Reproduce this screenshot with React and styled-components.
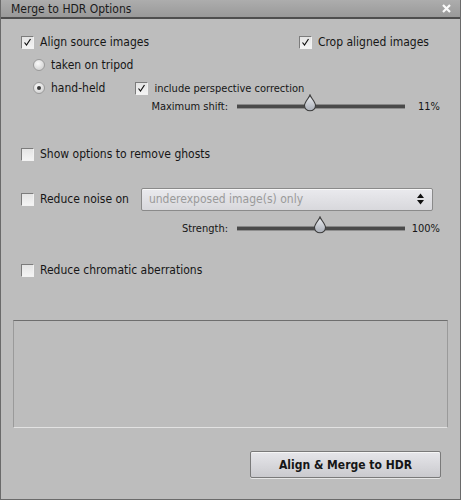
import React from "react";
import styled, { createGlobalStyle } from "styled-components";

//Global======================================================
const GlobalStyle = createGlobalStyle`
  html, body {
    margin: 0;
    padding: 0;
    background: #bdbdbd;
  }
  body {
    font-family: "DejaVu Sans Condensed", "DejaVu Sans", "Liberation Sans", sans-serif;
    color: #161616;
  }
`;

//Styled Components==========================================
const Dialog = styled.div`
  width: 461px;
  height: 500px;
  box-sizing: border-box;
  background: #bdbdbd;
  border-left: 1px solid #6a6a6a;
  border-right: 1px solid #6a6a6a;
  border-bottom: 1px solid #6a6a6a;
  display: flex;
  flex-direction: column;
`;

const TitleBar = styled.div`
  height: 17px;
  display: flex;
  align-items: center;
  justify-content: space-between;
  padding: 0 9px 0 10px;
  background: linear-gradient(#adadad, #999999);
  border-bottom: 2px solid #4e4e4e;
  font-size: 12px;
  color: #1a1a1a;
`;

const Body = styled.div`
  flex: 1;
  display: flex;
  flex-direction: column;
  padding: 0 13px 0 20px;
`;

const Row = styled.div`
  display: flex;
  align-items: center;
  height: 16px;
  margin-top: ${p => p.$top || 0}px;
  padding-left: ${p => p.$indent || 0}px;
`;

const Spread = styled(Row)`
  justify-content: space-between;
  padding-right: 18px;
`;

const Option = styled.label`
  display: flex;
  align-items: center;
  gap: 6px;
  margin-left: ${p => p.$gap || 0}px;
  font-size: ${p => (p.$small ? 11 : 12)}px;
  white-space: nowrap;
`;

const Box = styled.span`
  width: 11px;
  height: 11px;
  flex: none;
  border: 1px solid #7c7c7c;
  border-right-color: #f2f2f2;
  border-bottom-color: #f2f2f2;
  background: linear-gradient(#e4e4e4, #f4f4f4);
  display: flex;
  align-items: center;
  justify-content: center;
`;

const Radio = styled.span`
  width: 12px;
  height: 12px;
  flex: none;
  border-radius: 50%;
  box-sizing: border-box;
  border: 1px solid #9a9a9a;
  background: radial-gradient(circle at 40% 35%, #fafafa, #d4d4d4 75%);
  display: flex;
  align-items: center;
  justify-content: center;
  &::after {
    content: "";
    width: 4px;
    height: 4px;
    border-radius: 50%;
    background: ${p => (p.$on ? "#3a3a3a" : "transparent")};
  }
`;

const SliderRow = styled(Row)`
  height: 18px;
`;

const SliderLabel = styled.span`
  width: ${p => p.$width}px;
  font-size: 11px;
  text-align: right;
  flex: none;
`;

const Track = styled.div`
  position: relative;
  width: 168px;
  height: 3px;
  margin-left: 9px;
  flex: none;
  background: #4a4a4a;
  border-top: 1px solid #888;
  border-bottom: 1px solid #8e8e8e;
`;

const Thumb = styled.svg`
  position: absolute;
  top: -11px;
  margin-left: -7px;
`;

const Value = styled.span`
  width: 35px;
  text-align: right;
  font-size: 11px;
  flex: none;
`;

const Select = styled.div`
  margin-left: 12px;
  width: 292px;
  height: 23px;
  box-sizing: border-box;
  display: flex;
  align-items: center;
  justify-content: space-between;
  padding: 0 8px 0 7px;
  border: 1px solid #8a8a8a;
  border-radius: 2px;
  background: linear-gradient(#eaeaee, #d8d8dc);
  box-shadow: inset 0 1px 0 #f8f8f8;
  color: #9a9a9a;
  font-size: 12px;
`;

const Spacer = styled.div`
  height: ${p => p.$h}px;
  flex: none;
`;

const Messages = styled.div`
  margin-left: -8px;
  width: 435px;
  height: 108px;
  box-sizing: border-box;
  border: 1px solid #9a9a9a;
  border-top-color: #6e6e6e;
  border-bottom-color: #e2e2e2;
`;

const Footer = styled.div`
  display: flex;
  justify-content: flex-end;
  margin-top: 23px;
  padding-right: 6px;
`;

const Button = styled.button`
  width: 191px;
  height: 27px;
  border: 1px solid #7a7a7a;
  border-radius: 2px;
  background: linear-gradient(#e6e6ea, #cacace);
  box-shadow: inset 0 1px 0 #f6f6f6, 0 1px 0 #e6e6e6;
  font-family: inherit;
  font-size: 12px;
  font-weight: bold;
  color: #161616;
  padding: 0;
`;

//Pieces======================================================

const Check = ({ on }) => (
  <Box>
    {on && (
      <svg width="9" height="9" viewBox="0 0 9 9">
        <path d="M1.5 4.5 L3.5 7 L7.5 1" fill="none" stroke="#111" strokeWidth="1.2" />
      </svg>
    )}
  </Box>
);

const Slider = ({ id, label, labelWidth, value, pos, top }) => (
  <SliderRow $top={top}>
    <SliderLabel $width={labelWidth}>{label}</SliderLabel>
    <Track>
      <Thumb width="14" height="18" viewBox="0 0 14 18" style={{ left: pos }}>
        <defs>
          <linearGradient id={`thumb-${id}`} x1="0" y1="0" x2="0" y2="1">
            <stop offset="0" stopColor="#eceef2" />
            <stop offset="1" stopColor="#a9aeb7" />
          </linearGradient>
        </defs>
        <path
          d="M7 1 C8 4 12.5 8 12.5 11.5 C12.5 14.6 10 16.8 7 16.8 C4 16.8 1.5 14.6 1.5 11.5 C1.5 8 6 4 7 1 Z"
          fill={`url(#thumb-${id})`}
          stroke="#3c3c3c"
          strokeWidth="1.1"
        />
      </Thumb>
    </Track>
    <Value>{value}</Value>
  </SliderRow>
);

//Component===================================================

const App = () => (
  <>
    <GlobalStyle />
    <Dialog>
      <TitleBar>
        <span>Merge to HDR Options</span>
        <svg width="9" height="9" viewBox="0 0 9 9">
          <path d="M1 1 L8 8 M8 1 L1 8" stroke="#fafafa" strokeWidth="2.2" />
        </svg>
      </TitleBar>
      <Body>
        <Spread $top={15}>
          <Option><Check on />Align source images</Option>
          <Option><Check on />Crop aligned images</Option>
        </Spread>
        <Row $top={7} $indent={12}>
          <Option><Radio />taken on tripod</Option>
        </Row>
        <Row $top={7} $indent={12}>
          <Option><Radio $on />hand-held</Option>
          <Option $small $gap={30}><Check on />include perspective correction</Option>
        </Row>
        <Slider id="shift" label="Maximum shift:" labelWidth={207} value="11%" pos="73px" top={1} />
        <Row $top={31}>
          <Option><Check />Show options to remove ghosts</Option>
        </Row>
        <Row $top={29}>
          <Option><Check />Reduce noise on</Option>
          <Select>
            <span>underexposed image(s) only</span>
            <svg width="7" height="12" viewBox="0 0 7 12">
              <path d="M3.5 0.5 L7 5 L0 5 Z M3.5 11.5 L0 7 L7 7 Z" fill="#111" />
            </svg>
          </Select>
        </Row>
        <Slider id="strength" label="Strength:" labelWidth={207} value="100%" pos="83px" top={12} />
        <Row $top={25}>
          <Option><Check />Reduce chromatic aberrations</Option>
        </Row>
        <Spacer $h={42} />
        <Messages />
        <Footer>
          <Button>Align &amp; Merge to HDR</Button>
        </Footer>
      </Body>
    </Dialog>
  </>
);

export default App;
